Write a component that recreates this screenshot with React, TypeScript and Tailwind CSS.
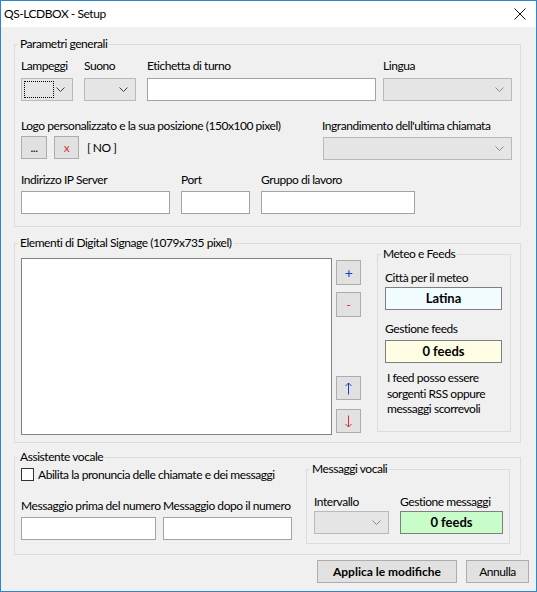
import React from 'react';

// Windows-style "Setup" dialog for QS-LCDBOX

const font = { fontFamily: 'Lato, "Segoe UI", sans-serif' };

function Chevron({ light }: { light?: boolean }) {
  return (
    <svg width="9" height="5" viewBox="0 0 9 5" className="shrink-0">
      <path d="M0.5 0.5 L4.5 4.5 L8.5 0.5" fill="none" stroke={light ? '#8a8a8a' : '#404040'} strokeWidth="1" />
    </svg>
  );
}

function Combo({ w, light, focus }: { w: string; light?: boolean; focus?: boolean }) {
  return (
    <div className={`${w} h-[23px] bg-[#e5e5e5] border border-[#b9b9b9] flex items-center justify-end pr-[7px] relative`}>
      {focus && <div className="absolute left-[2px] top-[2px] bottom-[2px] w-[30px] border border-dotted border-black" />}
      <Chevron light={light} />
    </div>
  );
}

function TextBox({ w }: { w: string }) {
  return <div className={`${w} h-[23px] bg-white border border-[#a3a3a3]`} />;
}

function Label({ children }: { children: React.ReactNode }) {
  return <div className="h-4 leading-4 text-[12px] text-black whitespace-nowrap">{children}</div>;
}

function Btn({ w, h = 'h-[23px]', children, className = '' }: { w: string; h?: string; children: React.ReactNode; className?: string }) {
  return (
    <div className={`${w} ${h} shrink-0 bg-[#e1e1e1] border border-[#adadad] flex items-center justify-center text-[12px] ${className}`}>
      {children}
    </div>
  );
}

function Legend({ children, ml = '-ml-[3px]' }: { children: React.ReactNode; ml?: string }) {
  return <legend className={`${ml} px-[2px] h-4 leading-4 text-[12px] text-black`}>{children}</legend>;
}

function Arrow({ up, color }: { up?: boolean; color: string }) {
  return (
    <svg width="7" height="13" viewBox="0 0 7 13">
      {up ? (
        <path d="M3.5 1 V12.5 M0.5 4 L3.5 1 L6.5 4" fill="none" stroke={color} strokeWidth="1" />
      ) : (
        <path d="M3.5 0.5 V12 M0.5 9 L3.5 12 L6.5 9" fill="none" stroke={color} strokeWidth="1" />
      )}
    </svg>
  );
}

export default function App() {
  return (
    <div style={font} className="w-[537px] h-[592px] border border-[#2b86cf] bg-[#f0f0f0] flex flex-col text-[12px] tracking-[-0.45px] text-black overflow-hidden">
      {/* title bar */}
      <div className="h-[26px] bg-white flex items-center justify-between pl-[3px] pr-[10px] shrink-0">
        <span className="text-[12px] leading-4">QS-LCDBOX - Setup</span>
        <svg width="12" height="12" viewBox="0 0 12 12">
          <path d="M0.5 0.5 L11.5 11.5 M11.5 0.5 L0.5 11.5" stroke="#111" strokeWidth="1" />
        </svg>
      </div>

      {/* Parametri generali */}
      <fieldset className="ml-[13px] mt-[9px] w-[507px] shrink-0 border border-[#dcdcdc] pl-[6px] pb-[12px]">
        <Legend>Parametri generali</Legend>
        <div className="flex mt-[6px]">
          <div className="flex flex-col w-[52px]">
            <Label>Lampeggi</Label>
            <div className="mt-[4px]"><Combo w="w-[52px]" focus /></div>
          </div>
          <div className="flex flex-col w-[52px] ml-[11px]">
            <Label>Suono</Label>
            <div className="mt-[4px]"><Combo w="w-[52px]" /></div>
          </div>
          <div className="flex flex-col w-[229px] ml-[11px]">
            <Label>Etichetta di turno</Label>
            <div className="mt-[4px]"><TextBox w="w-[229px]" /></div>
          </div>
          <div className="flex flex-col w-[129px] ml-[7px]">
            <Label>Lingua</Label>
            <div className="mt-[4px]"><Combo w="w-[129px]" light /></div>
          </div>
        </div>

        <div className="flex mt-[17px]">
          <div className="flex flex-col w-[301px]">
            <Label>Logo personalizzato e la sua posizione (150x100 pixel)</Label>
            <div className="flex items-center mt-[2px]">
              <Btn w="w-[26px]">...</Btn>
              <Btn w="w-[25px]" className="ml-[7px] text-[#e03030]">x</Btn>
              <span className="ml-[8px] leading-[23px]">[ NO ]</span>
            </div>
          </div>
          <div className="flex flex-col w-[190px]">
            <Label>Ingrandimento dell'ultima chiamata</Label>
            <div className="mt-[3px] ml-px"><Combo w="w-[189px]" light /></div>
          </div>
        </div>

        <div className="flex mt-[12px]">
          <div className="flex flex-col w-[149px]">
            <Label>Indirizzo IP Server</Label>
            <div className="mt-[3px]"><TextBox w="w-[149px]" /></div>
          </div>
          <div className="flex flex-col w-[69px] ml-[11px]">
            <Label>Port</Label>
            <div className="mt-[3px]"><TextBox w="w-[69px]" /></div>
          </div>
          <div className="flex flex-col w-[154px] ml-[11px]">
            <Label>Gruppo di lavoro</Label>
            <div className="mt-[3px]"><TextBox w="w-[154px]" /></div>
          </div>
        </div>
      </fieldset>

      {/* Elementi di Digital Signage */}
      <fieldset className="ml-[13px] mt-[8px] w-[507px] shrink-0 border border-[#dcdcdc] pl-[6px] pb-[7px]">
        <Legend>Elementi di Digital Signage (1079x735 pixel)</Legend>
        <div className="flex items-start">
          <div className="mt-[7px] w-[311px] h-[177px] shrink-0 bg-white border border-[#828282]" />
          <div className="flex flex-col ml-[4px] mt-[9px]">
            <Btn w="w-[25px]" h="h-[25px]" className="text-[#1a3cc8] text-[14px]">+</Btn>
            <Btn w="w-[25px]" h="h-[25px]" className="mt-[7px] text-[#d83030]">-</Btn>
            <Btn w="w-[25px]" h="h-[24px]" className="mt-[59px]"><Arrow up color="#1a3cc8" /></Btn>
            <Btn w="w-[25px]" h="h-[24px]" className="mt-[9px]"><Arrow color="#d83030" /></Btn>
          </div>
          <fieldset className="ml-[16px] -mt-[5px] w-[134px] h-[186px] shrink-0 border border-[#dcdcdc] pl-[7px]">
            <Legend ml="-ml-[4px]">Meteo e Feeds</Legend>
            <div className="mt-[8px]"><Label>Città per il meteo</Label></div>
            <div className="mt-[1px] w-[117px] h-[23px] bg-[#f0fcff] border border-[#7f7f7f] flex items-center justify-center font-bold text-[13px] tracking-normal">
              Latina
            </div>
            <div className="mt-[11px]"><Label>Gestione feeds</Label></div>
            <div className="mt-[3px] w-[117px] h-[23px] bg-[#fffde3] border border-[#7f7f7f] flex items-center justify-center font-bold text-[13px] tracking-normal">
              0 feeds
            </div>
            <div className="mt-[7px] ml-[2px] text-[12px] leading-[15.5px]">
              I feed posso essere<br />sorgenti RSS oppure<br />messaggi scorrevoli
            </div>
          </fieldset>
        </div>
      </fieldset>

      {/* Assistente vocale */}
      <fieldset className="ml-[13px] mt-[6px] w-[507px] h-[106px] shrink-0 border border-[#dcdcdc] pl-[6px]">
        <Legend>Assistente vocale</Legend>
        <div className="flex items-start">
          <div className="flex flex-col w-[271px] shrink-0">
            <div className="flex items-center h-[13px] mt-[3px]">
              <div className="w-[13px] h-[13px] shrink-0 bg-white border border-[#333]" />
              <span className="ml-[4px] leading-4 whitespace-nowrap">Abilita la pronuncia delle chiamate e dei messaggi</span>
            </div>
            <div className="flex mt-[17px]">
              <div className="flex flex-col w-[135px] shrink-0">
                <Label>Messaggio prima del numero</Label>
                <div className="mt-[3px]"><TextBox w="w-[135px]" /></div>
              </div>
              <div className="flex flex-col w-[129px] ml-[7px] shrink-0">
                <Label>Messaggio dopo il numero</Label>
                <div className="mt-[3px]"><TextBox w="w-[129px]" /></div>
              </div>
            </div>
          </div>
          <fieldset className="ml-[14px] -mt-[4px] w-[204px] h-[83px] shrink-0 border border-[#dcdcdc] pl-[7px]">
            <Legend ml="-ml-[4px]">Messaggi vocali</Legend>
            <div className="flex mt-[17px]">
              <div className="flex flex-col w-[75px] shrink-0">
                <Label>Intervallo</Label>
                <div className="mt-[1px]"><Combo w="w-[75px]" light /></div>
              </div>
              <div className="flex flex-col w-[103px] ml-[11px] shrink-0">
                <Label>Gestione messaggi</Label>
                <div className="mt-[1px] w-[103px] h-[23px] bg-[#c8fcc8] border border-[#7f7f7f] flex items-center justify-center font-bold text-[13px] tracking-normal">
                  0 feeds
                </div>
              </div>
            </div>
          </fieldset>
        </div>
      </fieldset>

      {/* bottom buttons */}
      <div className="flex justify-end mt-[5px] mr-[7px]">
        <Btn w="w-[140px]" className="font-bold tracking-normal">Applica le modifiche</Btn>
        <Btn w="w-[63px]" className="ml-[9px]">Annulla</Btn>
      </div>
    </div>
  );
}
